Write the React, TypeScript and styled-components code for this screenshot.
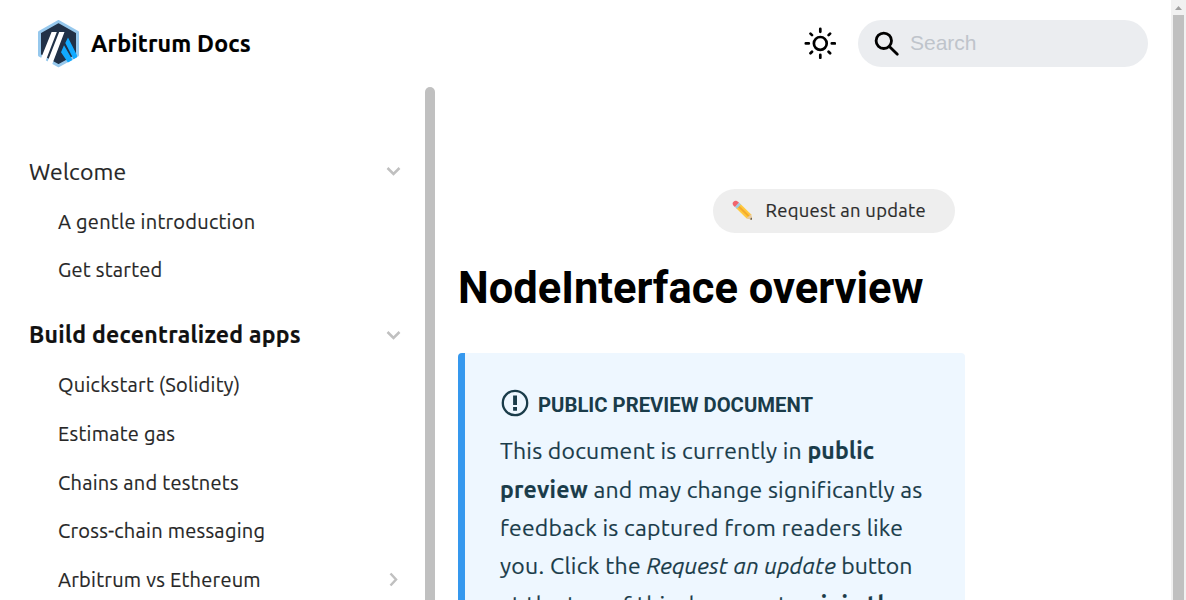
import React from "react";
import styled, { createGlobalStyle } from "styled-components";

const Global = createGlobalStyle`
  *, *::before, *::after { box-sizing: border-box; }
  html, body { margin: 0; background: #fff; overflow: hidden; }
  svg { display: block; flex: none; }
`;

const sans = `Ubuntu, "Noto Sans", sans-serif`;

const Page = styled.div`
  display: flex;
  width: 1186px;
  height: 600px;
  overflow: hidden;
  font-family: ${sans};
`;
const Site = styled.div`
  flex: 1;
  display: flex;
  flex-direction: column;
  min-width: 0;
`;
const Navbar = styled.header`
  display: flex;
  align-items: center;
  flex: none;
  height: 87px;
  padding: 0 23px 0 37px;
`;
const Brand = styled.a`
  display: flex;
  align-items: center;
  gap: 11px;
  color: #000;
`;
const Label = styled.span<{ $track?: number }>`
  white-space: nowrap;
  letter-spacing: ${(p) => p.$track ?? 0}px;
`;
const BrandName = styled(Label)`
  padding-bottom: 2px;
  font-size: 23.2px;
  font-weight: 700;
  -webkit-text-stroke: 0.18px;
`;
const ThemeToggle = styled.button`
  display: flex;
  margin: 0 22px 1px auto;
  padding: 0;
  border: 0;
  background: none;
`;
const SearchBox = styled.div`
  display: flex;
  align-items: center;
  gap: 10px;
  width: 290px;
  height: 47px;
  padding-left: 15px;
  padding-bottom: 1px;
  border-radius: 24px;
  background: #ebedf0;
  color: #bfc4cb;
  font: 21px/46px "Liberation Sans", Arial, sans-serif;
`;
const Body = styled.div`
  flex: 1;
  display: flex;
  min-height: 0;
`;
const Sidebar = styled.nav`
  display: flex;
  flex-direction: column;
  gap: 15.3px;
  flex: none;
  width: 425px;
  padding: 58.7px 24px 0 29px;
  overflow: hidden;
  -webkit-text-stroke: 0.18px;
`;
const Group = styled.section`
  flex: none;
`;
const GroupRow = styled.div<{ $active?: boolean }>`
  display: flex;
  align-items: center;
  justify-content: space-between;
  height: 51px;
  color: ${(p) => (p.$active ? "#111" : "#262626")};
  font-size: 23px;
  font-weight: ${(p) => (p.$active ? 700 : 400)};
`;
const ItemRow = styled.div`
  display: flex;
  align-items: center;
  justify-content: space-between;
  height: 48.7px;
  padding-left: 29px;
  color: #262626;
  font-size: 20px;
`;
const SidebarThumb = styled.div`
  flex: none;
  width: 10px;
  border-radius: 5px 5px 0 0;
  background: #c0c0c0;
`;
const Article = styled.main`
  display: flex;
  flex-direction: column;
  width: 530px;
  padding: 102px 0 0 23px;
  overflow: hidden;
`;
const UpdateButton = styled.button`
  display: flex;
  align-items: center;
  align-self: flex-end;
  flex: none;
  gap: 12.5px;
  width: 242px;
  height: 44px;
  margin-right: 10px;
  padding: 0 0 2px 19px;
  border: 0;
  border-radius: 22px;
  background: #eee;
  color: #2b2b2b;
  font: 18.4px/42px ${sans};
  -webkit-text-stroke: 0.18px;
`;
const Title = styled.h1`
  flex: none;
  margin: 28px 0 0;
  color: #000;
  font: 700 43.5px/56px Roboto, sans-serif;
  white-space: nowrap;
`;
const Notice = styled.aside`
  flex: none;
  width: 507px;
  height: 400px;
  margin-top: 36px;
  padding: 34px 0 0 35px;
  border-left: 7px solid #3598ee;
  border-radius: 4px;
  background: #eef7ff;
  color: #1a3c4a;
`;
const NoticeHeading = styled.div`
  display: flex;
  align-items: center;
  gap: 8px;
  height: 33px;
  font: 700 20.3px/33px Roboto, sans-serif;

  svg {
    margin-bottom: 1px;
  }
  span {
    padding-top: 3px;
  }
`;
const NoticeText = styled.p`
  margin: 12.15px 0 0;
  font-size: 23px;
  line-height: 38.4px;
  -webkit-text-stroke: 0.18px;
`;
const Line = styled.span`
  display: block;
  white-space: pre;
`;
const Run = styled(Label)`
  white-space: pre;
`;
const Strong = styled(Run)`
  font-weight: 700;
`;
const Em = styled(Run)`
  font-style: italic;
`;
const ScrollTrack = styled.div`
  display: flex;
  flex-direction: column;
  align-items: center;
  flex: none;
  width: 15px;
  background: #f1f1f1;
`;
const ScrollArrow = styled.div`
  display: flex;
  align-items: center;
  justify-content: center;
  height: 15px;
`;
const ScrollThumb = styled.div`
  flex: 1;
  width: 11px;
  background: #c0c0c0;
`;

const Logo = () => (
  <svg width="43" height="48" viewBox="0 0 43 48">
    <path d="M21.500 1.500 40.500 12.300V35.200L21.500 45.800 2.500 35.200V12.300Z" fill="#213147" stroke="#96c8ed" strokeWidth="3" strokeLinejoin="round" />
    <path d="M24 32.300 27 25.200 35.500 40 30.900 42.600ZM28.300 23 31 17.500 40 35.200V37.200L36.600 39.300Z" fill="#12aaff" />
    <path d="M14.600 12h5.200L8.500 41.200 3.900 38.500ZM22.200 12h5.300L15 44.800 10.300 42.200Z" fill="#fff" />
  </svg>
);
const Sun = () => (
  <svg width="32" height="32" viewBox="0 0 32 32" fill="none" stroke="#000" strokeWidth="2.700" strokeLinecap="round">
    <circle cx="16.300" cy="16.400" r="6.400" />
    <path d="M16.300 1.800v3M16.300 27.800v3M1.800 16.400h3M27.800 16.400h3M6.500 6.600l1.500 1.500M24.600 24.700l1.500 1.500M6.500 26.200l1.500-1.500M24.600 8.100l1.500-1.500" />
  </svg>
);
const Magnifier = () => (
  <svg width="27" height="27" viewBox="0 0 27 27" fill="none" stroke="#000" strokeWidth="2.800">
    <circle cx="10.800" cy="10.800" r="7.700" />
    <path d="M16.400 16.400 24.300 24.300" strokeLinecap="round" />
  </svg>
);
const Pencil = () => (
  <svg width="21" height="21" viewBox="0 0 21 21">
    <path d="M4.200 8.200 8.300 3.800 19 14.200 20 19.700 14.400 18.300Z" fill="#ffc83d" />
    <path d="M6.900 5.300 18 15.900l-1.300 1.500L5.500 6.800Z" fill="#f3aa2c" />
    <path d="M14.400 18.300 19 14.200 20 19.700Z" fill="#e6c9a2" />
    <path d="M18 19.200 19.600 17.500 20 19.700Z" fill="#444" />
    <path d="M2.900 6.900 7 2.600 8.900 4.400 4.800 8.700Z" fill="#9fcbe0" />
    <path d="M2.900 6.900C.2 4.700 0 3.100 1.500 1.700 3 .1 4.700.3 7 2.600Z" fill="#f0656e" />
  </svg>
);
const Chevron = ({ open }: { open?: boolean }) => (
  <svg width="16" height="16" viewBox="0 0 16 16" fill="none" stroke="#c0c0c0" strokeWidth="2.500">
    <path d={open ? "M2.500 5 8.500 11 14.500 5" : "M5.500 2.500 11 8.500 5.500 14.500"} />
  </svg>
);
const AlertIcon = () => (
  <svg width="30" height="30" viewBox="0 0 30 30">
    <circle cx="15" cy="15" r="12.200" fill="none" stroke="#1a3c4a" strokeWidth="2.300" />
    <path d="M13.100 7.500h3.900v9.500h-3.900zM13.100 19h3.900v3.700h-3.900z" fill="#1a3c4a" />
  </svg>
);

type Item = { text: string; nested?: boolean };
type Section = { text: string; track: number; active?: boolean; items: Item[] };

const sections: Section[] = [
  {
    text: "Welcome",
    track: 0.15,
    items: [{ text: "A gentle introduction" }, { text: "Get started" }],
  },
  {
    text: "Build decentralized apps",
    track: 0.28,
    active: true,
    items: [
      { text: "Quickstart (Solidity)" },
      { text: "Estimate gas" },
      { text: "Chains and testnets" },
      { text: "Cross-chain messaging" },
      { text: "Arbitrum vs Ethereum", nested: true },
    ],
  },
];

export default function App() {
  return (
    <Page>
      <Global />
      <Site>
        <Navbar>
          <Brand>
            <Logo />
            <BrandName $track={0.15}>Arbitrum Docs</BrandName>
          </Brand>
          <ThemeToggle aria-label="Switch theme">
            <Sun />
          </ThemeToggle>
          <SearchBox>
            <Magnifier />
            <Label>Search</Label>
          </SearchBox>
        </Navbar>
        <Body>
          <Sidebar>
            {sections.map((s) => (
              <Group key={s.text}>
                <GroupRow $active={s.active}>
                  <Label $track={s.track}>{s.text}</Label>
                  <Chevron open />
                </GroupRow>
                {s.items.map((i) => (
                  <ItemRow key={i.text}>
                    <Label $track={0.26}>{i.text}</Label>
                    {i.nested && <Chevron />}
                  </ItemRow>
                ))}
              </Group>
            ))}
          </Sidebar>
          <SidebarThumb />
          <Article>
            <UpdateButton>
              <Pencil />
              <Label $track={0.3}>Request an update</Label>
            </UpdateButton>
            <Title>NodeInterface overview</Title>
            <Notice>
              <NoticeHeading>
                <AlertIcon />
                <Label>PUBLIC PREVIEW DOCUMENT</Label>
              </NoticeHeading>
              <NoticeText>
                <Line>
                  <Run $track={0.22}>This document is currently in </Run>
                  <Strong $track={0.22}>public</Strong>
                </Line>
                <Line>
                  <Strong $track={0.25}>preview</Strong>
                  <Run $track={0.19}> and may change significantly as</Run>
                </Line>
                <Line>
                  <Run $track={0.23}>feedback is captured from readers like</Run>
                </Line>
                <Line>
                  <Run $track={0.3}>you. Click the </Run>
                  <Em $track={0.15}>Request an update</Em>
                  <Run $track={0}> button</Run>
                </Line>
                <Line>
                  <Run $track={0.15}>at the top of this document or </Run>
                  <Strong $track={0.2}>join the</Strong>
                </Line>
              </NoticeText>
            </Notice>
          </Article>
        </Body>
      </Site>
      <ScrollTrack>
        <ScrollArrow>
          <svg width="7" height="4" viewBox="0 0 7 4">
            <path d="M3.500 0 7 4H0Z" fill="#a0a0a0" />
          </svg>
        </ScrollArrow>
        <ScrollThumb />
      </ScrollTrack>
    </Page>
  );
}
